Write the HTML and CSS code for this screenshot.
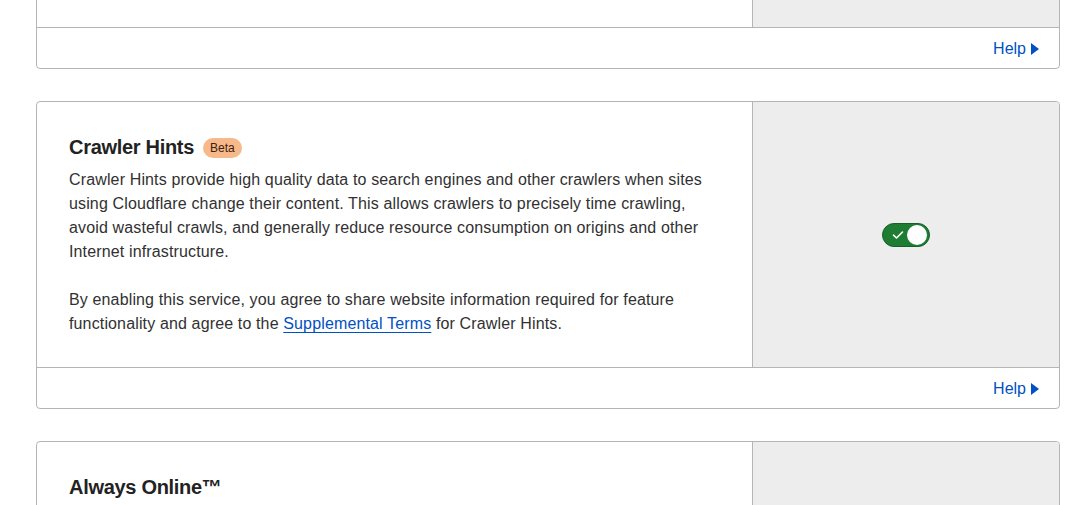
FILE: index.html
```html
<!DOCTYPE html>
<html>
<head>
<meta charset="utf-8">
<link rel="stylesheet" href="styles.css">
</head>
<body>
<div class="page">
  <div class="card card-clipped">
    <div class="card-body">
      <div class="card-main"></div>
      <div class="card-side"></div>
    </div>
    <div class="card-footer"><a class="help" href="#">Help<span class="tri"></span></a></div>
  </div>

  <div class="card">
    <div class="card-body">
      <div class="card-main">
        <h3 class="title">Crawler Hints <span class="badge">Beta</span></h3>
        <p class="desc">Crawler Hints provide high quality data to search engines and other crawlers when sites using Cloudflare change their content. This allows crawlers to precisely time crawling, avoid wasteful crawls, and generally reduce resource consumption on origins and other Internet infrastructure.</p>
        <p class="desc">By enabling this service, you agree to share website information required for feature functionality and agree to the <a class="link" href="#">Supplemental Terms</a> for Crawler Hints.</p>
      </div>
      <div class="card-side center">
        <div class="toggle">
          <svg class="check" width="12" height="10" viewBox="0 0 12 10"><path d="M1.5 5.2 L4.5 8 L10.5 2" fill="none" stroke="#fff" stroke-width="1.6" stroke-linecap="round" stroke-linejoin="round"/></svg>
          <span class="knob"></span>
        </div>
      </div>
    </div>
    <div class="card-footer"><a class="help" href="#">Help<span class="tri"></span></a></div>
  </div>

  <div class="card card-last">
    <div class="card-body">
      <div class="card-main">
        <h3 class="title">Always Online™</h3>
      </div>
      <div class="card-side"></div>
    </div>
  </div>
</div>
</body>
</html>
```

FILE: styles.css
```css
html, body {
  margin: 0;
  padding: 0;
  background: #fff;
}
body {
  font-family: "Liberation Sans", Arial, sans-serif;
  color: #313131;
  overflow: hidden;
  height: 505px;
}
.page {
  padding-left: 36px;
  width: 1024px;
  display: flex;
  flex-direction: column;
  gap: 32px;
}
.card {
  border: 1px solid #b5b5b5;
  border-radius: 4px;
  background: #fff;
  overflow: hidden;
}
.card-clipped {
  margin-top: -74px;
}
.card-clipped .card-body {
  height: 100px;
}
.card-last .card-body {
  height: 120px;
}
.card-body {
  display: flex;
}
.card-main {
  width: 651px;
  padding: 33px 32px 31px;
  border-right: 1px solid #b5b5b5;
}
.card-side {
  flex: 1;
  background: #ededed;
}
.center {
  display: flex;
  align-items: center;
  justify-content: center;
}
.title {
  margin: 0 0 8px;
  font-size: 20px;
  line-height: 25px;
  font-weight: 700;
  letter-spacing: -0.3px;
  color: #222;
  display: flex;
  align-items: center;
}
.badge {
  display: inline-block;
  margin-left: 9px;
  background: #f8b98a;
  color: #3d220e;
  font-size: 12px;
  font-weight: 400;
  letter-spacing: 0;
  line-height: 20px;
  padding: 0 7px;
  border-radius: 10px;
}
.desc {
  margin: 0 0 24px;
  font-size: 16px;
  line-height: 24px;
  letter-spacing: 0.14px;
  color: #313131;
}
.desc:last-child {
  margin-bottom: 0;
}
.link {
  color: #0051c3;
  text-decoration: underline;
  text-underline-offset: 3px;
  text-decoration-thickness: 1px;
}
.card-footer {
  border-top: 1px solid #b5b5b5;
  height: 40px;
  display: flex;
  align-items: center;
  justify-content: flex-end;
  padding-right: 20px;
}
.help {
  margin-top: 2px;
  color: #0051c3;
  text-decoration: none;
  font-size: 16px;
  display: flex;
  align-items: center;
}
.tri {
  display: inline-block;
  width: 0;
  height: 0;
  margin-left: 5px;
  border-top: 6px solid transparent;
  border-bottom: 6px solid transparent;
  border-left: 8px solid #0051c3;
}
.toggle {
  width: 48px;
  height: 24px;
  box-sizing: border-box;
  border-radius: 12px;
  background: #1e7d32;
  border: 1px solid #17602a;
  display: flex;
  align-items: center;
  justify-content: space-between;
  padding: 0 2px 0 9px;
}
.check {
  display: block;
}
.knob {
  width: 20px;
  height: 20px;
  border-radius: 50%;
  background: #fff;
}
```
